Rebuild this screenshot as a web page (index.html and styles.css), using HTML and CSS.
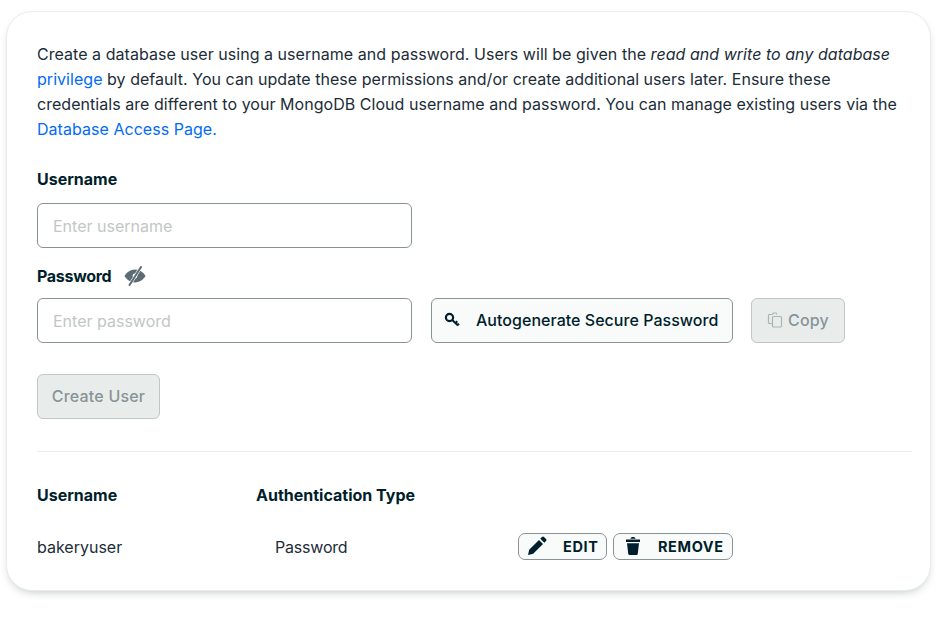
FILE: index.html
```html
<!DOCTYPE html>
<html lang="en">
<head>
<meta charset="utf-8">
<title>Database user</title>
<link rel="stylesheet" href="styles.css">
</head>
<body>
<main class="card">
  <p class="intro">Create a database user using a username and password. Users will be given the <em>read and write to any database</em> <a href="#">privilege</a> by default. You can update these permissions and/or create additional users later. Ensure these credentials are different to your MongoDB Cloud username and password. You can manage existing users via the <a href="#">Database Access Page.</a></p>

  <label class="label label-user" for="u">Username</label>
  <input class="input" id="u" type="text" placeholder="Enter username">

  <div class="label label-pass">
    <label for="p">Password</label>
    <svg class="eye" width="22" height="20" viewBox="0 0 22 20"><path fill="#5c6c75" d="M11 3.600c4.800 0 8.600 3.200 10.500 6.400-1.900 3.200-5.700 6.400-10.500 6.400S2.400 13.200.5 10C2.400 6.800 6.200 3.600 11 3.600z"/><circle cx="11" cy="10" r="2.400" fill="#fff"/><path d="M5.500 19 17 1" stroke="#fff" stroke-width="3.200"/><path d="M5.500 19 17 1" stroke="#5c6c75" stroke-width="2" stroke-linecap="round"/></svg>
  </div>
  <div class="pass-row">
    <input class="input" id="p" type="password" placeholder="Enter password">
    <button class="btn auto" type="button">
      <svg width="18" height="16" viewBox="0 0 18 16"><circle cx="5.500" cy="5.500" r="3.600" fill="none" stroke="#001e2b" stroke-width="2.200"/><path d="M8.500 8.200 14 13.500M11.500 11l1.800-1.700M13.600 13l1.400-1.400" fill="none" stroke="#001e2b" stroke-width="2"/></svg>
      <span>Autogenerate Secure Password</span>
    </button>
    <button class="btn disabled copy" type="button" disabled>
      <svg width="16" height="16" viewBox="0 0 16 16" fill="none" stroke="#a9b5b3" stroke-width="1.200"><path d="M5 11.500H2.500a1 1 0 0 1-1-1v-7a1 1 0 0 1 1-1H5l1.500-1.500H9l1 1.500"/><rect x="5.500" y="4.500" width="9" height="10.500" rx="1"/></svg>
      <span>Copy</span>
    </button>
  </div>

  <button class="btn disabled create" type="button" disabled>Create User</button>

  <hr class="divider">

  <div class="users">
    <div class="th">Username</div>
    <div class="th">Authentication Type</div>
    <div></div>
    <div class="td">bakeryuser</div>
    <div class="td auth">Password</div>
    <div class="actions">
      <button class="pill edit" type="button">
        <svg width="20" height="20" viewBox="0 0 20 20"><path fill="#001e2b" d="M1 19l1.200-5.200L12 4l4 4-9.800 9.800zM13.300 2.700 15 1a1.400 1.400 0 0 1 2 0l2 2a1.400 1.400 0 0 1 0 2l-1.700 1.700z"/></svg>
        <span>EDIT</span>
      </button>
      <button class="pill remove" type="button">
        <svg width="16" height="20" viewBox="0 0 16 20"><path fill="#001e2b" d="M1 3.500h14v2.600H1zM5.500 2.800C5.500 1.500 6.500 1 8 1s2.500.5 2.500 1.800zM2 7.200h12l-1.200 10.300c-.1 1-.8 1.500-1.800 1.500H5c-1 0-1.700-.5-1.800-1.500z"/></svg>
        <span>REMOVE</span>
      </button>
    </div>
  </div>
</main>
</body>
</html>
```
FILE: styles.css
```css
* { box-sizing: border-box; }
html, body { margin: 0; padding: 0; background: #fff; }
body {
  width: 936px;
  height: 618px;
  overflow: hidden;
  padding: 11px 5px 0 6px;
  font-family: "Inter", "Liberation Sans", sans-serif;
  color: #001e2b;
}
.card {
  height: 580px;
  padding: 30px 18px 0 30px;
  background: #fff;
  border: 1px solid #e8edeb;
  border-radius: 26px;
  box-shadow: 0 4px 10px -4px rgba(0, 30, 43, 0.3);
}
.intro {
  margin: 0;
  font-size: 16px;
  line-height: 25px;
  letter-spacing: 0.04px;
  color: #1c2d38;
}
.intro a { color: #016bf8; text-decoration: none; }
.label {
  display: flex;
  align-items: center;
  font-size: 16px;
  line-height: 20px;
  font-weight: 700;
}
.label-user { margin-top: 27px; }
.label-pass { margin-top: 18px; gap: 13px; height: 20px; }
.label-pass label { letter-spacing: -0.3px; }
.eye { display: block; }
.input {
  display: block;
  width: 375px;
  height: 45px;
  margin-top: 14px;
  padding: 0 15px;
  border: 1px solid #889397;
  border-radius: 6px;
  background: #fff;
  font: 400 16px "Inter", "Liberation Sans", sans-serif;
  color: #001e2b;
  outline: none;
}
.input::placeholder { color: #c1c7c6; opacity: 1; }
.pass-row { display: flex; align-items: flex-start; margin-top: 12px; }
.pass-row .input { margin-top: 0; }
.btn {
  display: flex;
  align-items: center;
  height: 45px;
  padding-bottom: 1px;
  border-radius: 6px;
  font: 500 16px "Inter", "Liberation Sans", sans-serif;
  letter-spacing: 0.03px;
}
.auto {
  width: 302px;
  margin-left: 19px;
  padding: 0 0 1px 12px;
  gap: 14px;
  border: 1px solid #889397;
  background: #f9fbfa;
  color: #001e2b;
}
.disabled {
  border: 1px solid #c1c7c6;
  background: #e8edeb;
  color: #889397;
}
.copy {
  width: 94px;
  margin-left: 18px;
  padding: 0 0 1px 15px;
  gap: 5px;
  letter-spacing: 0.2px;
}
.create {
  width: 123px;
  margin-top: 31px;
  justify-content: center;
  padding: 0 0 1px;
  letter-spacing: 0.2px;
}
.divider {
  height: 1px;
  margin: 32px 0 0;
  border: 0;
  background: #e8edeb;
}
.users {
  display: grid;
  grid-template-columns: 219px 262px 1fr;
  grid-template-rows: 24px 28px;
  row-gap: 26px;
  margin-top: 31px;
  align-items: center;
}
.th { font-size: 16px; font-weight: 700; }
.td { font-size: 16px; color: #1c2d38; }
.auth { padding-left: 19px; letter-spacing: -0.2px; }
.actions { display: flex; gap: 6px; margin-bottom: 2px; }
.pill {
  display: flex;
  align-items: center;
  height: 27px;
  padding: 0;
  border: 1px solid #889397;
  border-radius: 7px;
  background: #f9fbfa;
  color: #001e2b;
  font: 700 14.5px "Inter", "Liberation Sans", sans-serif;
  letter-spacing: 0.6px;
}
.edit { width: 89px; padding-left: 8px; gap: 16px; }
.remove { width: 120px; padding-left: 11px; gap: 17px; }
```
